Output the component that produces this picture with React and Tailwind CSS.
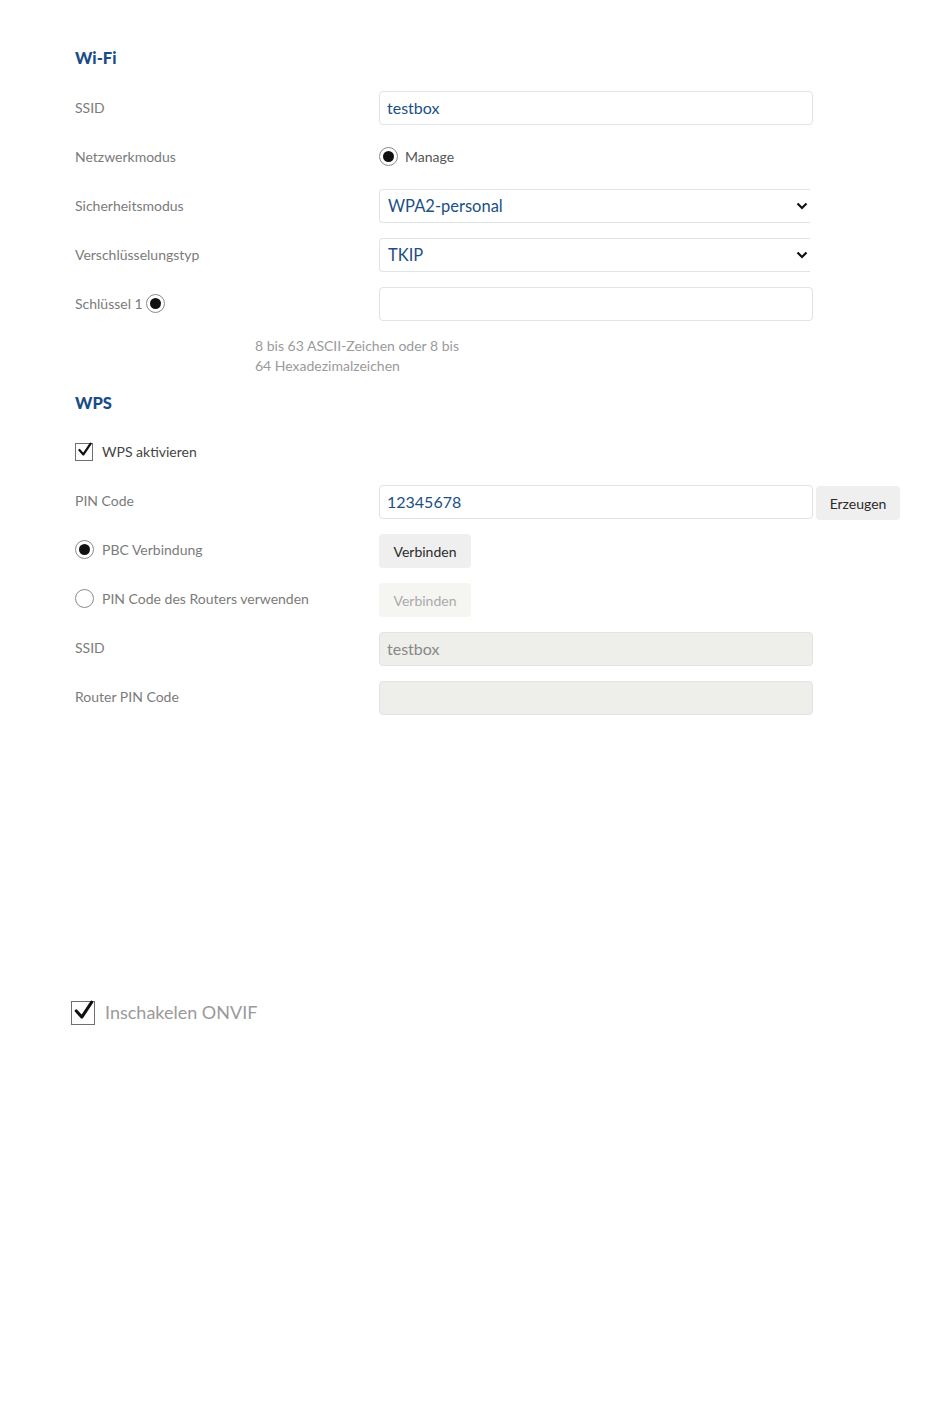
import React from 'react';

const Radio = ({ checked }) => (
  <span className="inline-flex h-[19px] w-[19px] shrink-0 items-center justify-center rounded-full border border-[#8a8a8a] bg-white">
    {checked && <span className="h-[11px] w-[11px] rounded-full bg-[#111]" />}
  </span>
);

const Check = ({ size = 18 }) => (
  <span
    className="relative inline-block shrink-0 border border-[#6f6f6f] bg-white"
    style={{ width: size, height: size }}
  >
    <svg viewBox="0 0 20 20" className="absolute left-[1px] top-[-2px] h-full w-full">
      <path d="M3 10 L8 15.5 L17 2" fill="none" stroke="#111" strokeWidth="2.8" strokeLinecap="round" strokeLinejoin="round" />
    </svg>
  </span>
);

const Row = ({ label, children }) => (
  <div className="flex h-[49px] items-center">
    <div className="w-[304px] shrink-0 text-[14px] text-[#7b7b7b]">{label}</div>
    <div className="flex items-center">{children}</div>
  </div>
);

const Input = ({ value, disabled }) => (
  <div
    className={`flex h-[34px] w-[434px] items-center rounded-[4px] border border-[#dfe4e6] px-[7px] text-[16px] ${
      disabled ? 'bg-[#eeeeea] text-[#888]' : 'bg-white text-[#1c4f85]'
    }`}
  >
    {value}
  </div>
);

const Select = ({ value }) => (
  <div className="flex h-[34px] w-[431px] items-center justify-between rounded-l-[4px] border-y border-l border-[#dfe4e6] bg-white pl-[8px] pr-[2px] pt-[1px] text-[16.5px] text-[#1c4f85]">
    <span>{value}</span>
    <svg viewBox="0 0 12 8" className="h-[8px] w-[12px]">
      <path d="M1.5 1.5 L6 6 L10.5 1.5" fill="none" stroke="#111" strokeWidth="2.2" />
    </svg>
  </div>
);

const Button = ({ children, disabled, className = '' }) => (
  <div
    className={`flex h-[34px] items-center justify-center rounded-[4px] text-[14px] ${
      disabled ? 'bg-[#f5f5f2] text-[#aaa]' : 'bg-[#efefef] text-[#2b2b2b]'
    } ${className}`}
  >
    {children}
  </div>
);

export default function App() {
  return (
    <div className="min-h-[1409px] bg-white pl-[75px] pt-[46px] font-['Lato','Noto_Sans',sans-serif]">
      <h2 className="mb-[13px] h-[24px] text-[16.5px] font-black leading-[24px] text-[#1a4d86]">Wi-Fi</h2>

      <Row label="SSID">
        <Input value="testbox" />
      </Row>
      <Row label="Netzwerkmodus">
        <Radio checked />
        <span className="ml-[7px] text-[14px] text-[#555]">Manage</span>
      </Row>
      <Row label="Sicherheitsmodus">
        <Select value="WPA2-personal" />
      </Row>
      <Row label="Verschlüsselungstyp">
        <Select value="TKIP" />
      </Row>
      <Row
        label={
          <span className="flex items-center gap-[3px]">
            Schlüssel 1 <Radio checked />
          </span>
        }
      >
        <Input value="" />
      </Row>

      <p className="ml-[180px] mt-[8px] w-[220px] text-[14px] leading-[20px] text-[#9a9a9a]">
        8 bis 63 ASCII-Zeichen oder 8 bis 64 Hexadezimalzeichen
      </p>

      <h2 className="mb-[12px] mt-[15px] h-[24px] text-[16.5px] font-black leading-[24px] text-[#1a4d86]">WPS</h2>

      <div className="flex h-[49px] items-center gap-[9px]">
        <Check />
        <span className="text-[14px] text-[#444]">WPS aktivieren</span>
      </div>
      <Row label="PIN Code">
        <div className="mt-[2px]">
          <Input value="12345678" />
        </div>
        <Button className="ml-[3px] mt-[5px] w-[84px] text-[13px]">Erzeugen</Button>
      </Row>
      <Row
        label={
          <span className="flex items-center gap-[8px]">
            <Radio checked /> PBC Verbindung
          </span>
        }
      >
        <Button className="mt-[3px] w-[92px]">Verbinden</Button>
      </Row>
      <Row
        label={
          <span className="flex items-center gap-[8px]">
            <Radio /> PIN Code des Routers verwenden
          </span>
        }
      >
        <Button disabled className="mt-[3px] w-[92px]">Verbinden</Button>
      </Row>
      <Row label="SSID">
        <div className="mt-[2px]">
          <Input value="testbox" disabled />
        </div>
      </Row>
      <Row label="Router PIN Code">
        <div className="mt-[2px]">
          <Input value="" disabled />
        </div>
      </Row>

      <div className="ml-[-4px] mt-[278px] flex items-center gap-[10px]">
        <Check size={24} />
        <span className="text-[18px] text-[#9a9a9a]">Inschakelen ONVIF</span>
      </div>
    </div>
  );
}
